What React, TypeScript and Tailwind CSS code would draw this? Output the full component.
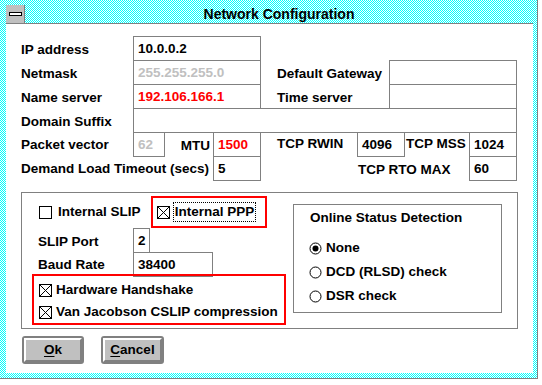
import React from "react"

function Field({ className, children }: { className: string; children?: React.ReactNode }) {
  return (
    <div className={`h-[25px] shrink-0 border border-[#808080] bg-white pl-[4px] flex items-center ${className}`}>
      {children}
    </div>
  )
}

function Check({ on }: { on: boolean }) {
  return (
    <svg width="13" height="13" viewBox="0 0 13 13" className="shrink-0">
      <rect x="0.5" y="0.5" width="12" height="12" fill="#fff" stroke="#000" />
      {on ? <path d="M1 1L12 12M12 1L1 12" stroke="#000" strokeWidth="1" /> : null}
    </svg>
  )
}

function Radio({ on }: { on: boolean }) {
  return (
    <svg width="13" height="13" viewBox="0 0 13 13" className="shrink-0">
      <circle cx="6.5" cy="6.5" r="5.5" fill="#fff" stroke="#000" />
      {on ? <circle cx="6.5" cy="6.5" r="3" fill="#000" /> : null}
    </svg>
  )
}

function Button({ mnemonic, rest, className }: { mnemonic: string; rest: string; className: string }) {
  return (
    <div className={`h-[28px] rounded-[3px] border-2 border-[#808080] bg-[#c0c0c0] ${className}`}>
      <div className="h-full border-2 border-t-white border-l-white border-b-[#808080] border-r-[#808080] flex items-center justify-center">
        <span>
          <span className="underline underline-offset-2">{mnemonic}</span>
          {rest}
        </span>
      </div>
    </div>
  )
}

// cyan/white 1px checker used by the win3.1 frame and caption
function Dither() {
  return (
    <svg className="absolute inset-0 w-full h-full" shapeRendering="crispEdges">
      <defs>
        <pattern id="dither" width="2" height="2" patternUnits="userSpaceOnUse">
          <rect width="2" height="2" fill="#ffffff" />
          <rect width="1" height="1" fill="#00ffff" />
          <rect x="1" y="1" width="1" height="1" fill="#00ffff" />
        </pattern>
      </defs>
      <rect width="100%" height="100%" fill="url(#dither)" />
    </svg>
  )
}

export default function App() {
  return (
    <div className="w-[542px] h-[385px] bg-white font-['Liberation_Sans',Arial,sans-serif] text-[13.5px] font-bold text-black leading-none">
      <div className="relative w-[538px] h-[379px] border-r border-b border-[#808080]">
        <Dither />
        <div className="relative h-full pl-[6px] pt-[5px] pr-[4px] pb-[5px] flex flex-col">
          {/* title bar */}
          <div className="h-[19px] flex border-b border-[#808080]">
            <div className="w-[19px] h-[18px] bg-[#c0c0c0] border-r border-[#808080] flex items-center justify-center">
              <div className="w-[13px] h-[4px] border border-black bg-white" />
            </div>
            <div className="flex-1 flex items-center justify-center text-[14px]">Network Configuration</div>
          </div>

          {/* client */}
          <div className="flex-1 bg-white pl-[15px] pt-[12px]">
            <div className="flex h-[24px]">
              <div className="w-[112px] pt-[4px] flex items-center">IP address</div>
              <Field className="w-[128px]">10.0.0.2</Field>
            </div>
            <div className="flex h-[24px]">
              <div className="w-[112px] pt-[4px] flex items-center">Netmask</div>
              <Field className="w-[128px] text-[#c0c0c0]">255.255.255.0</Field>
              <div className="w-[16px]" />
              <div className="w-[112px] pt-[4px] flex items-center">Default Gateway</div>
              <Field className="w-[128px]" />
            </div>
            <div className="flex h-[24px]">
              <div className="w-[112px] pt-[4px] flex items-center">Name server</div>
              <Field className="w-[128px] text-[#ff0000]">192.106.166.1</Field>
              <div className="w-[16px]" />
              <div className="w-[112px] pt-[4px] flex items-center">Time server</div>
              <Field className="w-[128px]" />
            </div>
            <div className="flex h-[24px]">
              <div className="w-[112px] pt-[3px] flex items-center">Domain Suffix</div>
              <Field className="w-[384px]" />
            </div>
            <div className="flex h-[24px]">
              <div className="w-[112px] pt-[2px] flex items-center">Packet vector</div>
              <Field className="w-[32px] text-[#c0c0c0]">62</Field>
              <div className="w-[48px] pt-[3px] pr-[3px] flex items-center justify-end">MTU</div>
              <Field className="w-[48px] text-[#ff0000]">1500</Field>
              <div className="w-[16px]" />
              <div className="w-[80px] flex items-center">TCP RWIN</div>
              <Field className="w-[48px]">4096</Field>
              <div className="w-[64px] pl-[1px] flex items-center">TCP MSS</div>
              <Field className="w-[48px]">1024</Field>
            </div>
            <div className="flex h-[24px]">
              <div className="w-[192px] pt-[2px] flex items-center">Demand Load Timeout (secs)</div>
              <Field className="w-[48px]">5</Field>
              <div className="w-[96px]" />
              <div className="w-[112px] pt-[3px] pl-[1px] flex items-center">TCP RTO MAX</div>
              <Field className="w-[48px]">60</Field>
            </div>

            {/* options group */}
            <div className="mt-[12px] w-[497px] h-[137px] border border-[#808080] flex">
              <div className="w-[271px] flex flex-col">
                <div className="pt-[3px] pl-[17px] flex items-center h-[35px]">
                  <div className="w-[112px] flex items-center gap-[6px]">
                    <Check on={false} />
                    <span>Internal SLIP</span>
                  </div>
                  <div className="w-[116px] h-[32px] border-2 border-[#ff0000] pl-[4px] flex items-center gap-[3px]">
                    <Check on={true} />
                    <div className="w-[83px] h-[20px] border border-dotted border-black flex items-center justify-center">
                      Internal PPP
                    </div>
                  </div>
                </div>
                <div className="flex h-[24px] pl-[16px]">
                  <div className="w-[95px] pt-[4px] flex items-center">SLIP Port</div>
                  <Field className="w-[17px]">2</Field>
                </div>
                <div className="flex h-[22px] pl-[16px]">
                  <div className="w-[95px] pt-[4px] flex items-center">Baud Rate</div>
                  <Field className="w-[80px]">38400</Field>
                </div>
                <div className="relative z-10 ml-[10px] w-[254px] h-[51px] border-2 border-[#ff0000] pl-[5px] pt-[3px] flex flex-col">
                  <div className="h-[23px] flex items-center gap-[4px]">
                    <Check on={true} />
                    <span>Hardware Handshake</span>
                  </div>
                  <div className="h-[23px] flex items-center gap-[4px]">
                    <Check on={true} />
                    <span>Van Jacobson CSLIP compression</span>
                  </div>
                </div>
              </div>

              <div className="mt-[11px] w-[209px] h-[109px] border border-[#808080] pl-[15px] flex flex-col">
                <div className="mt-[5px] h-[16px] flex items-center pl-[1px]">Online Status Detection</div>
                <div className="mt-[10px] flex flex-col">
                  <div className="h-[24px] flex items-center gap-[4px]">
                    <Radio on={true} />
                    <span>None</span>
                  </div>
                  <div className="h-[24px] flex items-center gap-[4px]">
                    <Radio on={false} />
                    <span>DCD (RLSD) check</span>
                  </div>
                  <div className="h-[24px] flex items-center gap-[4px]">
                    <Radio on={false} />
                    <span>DSR check</span>
                  </div>
                </div>
              </div>
            </div>

            {/* buttons */}
            <div className="mt-[7px] ml-[1px] flex gap-[17px]">
              <Button mnemonic="O" rest="k" className="w-[62px]" />
              <Button mnemonic="C" rest="ancel" className="w-[63px]" />
            </div>
          </div>
        </div>
      </div>
    </div>
  )
}
